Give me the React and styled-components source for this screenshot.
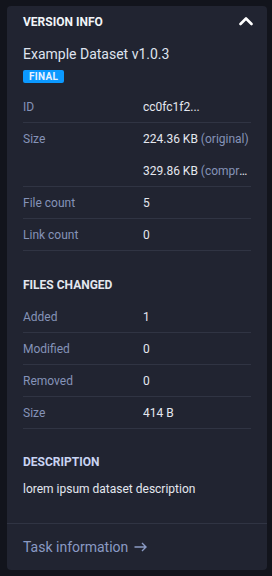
import React from "react";
import styled, { createGlobalStyle } from "styled-components";

const Global = createGlobalStyle`
  html, body { margin: 0; padding: 0; background: #12141c; }
  body { font-family: Roboto, "Liberation Sans", sans-serif; -webkit-font-smoothing: antialiased; }
  * { box-sizing: border-box; }
`;

const Page = styled.div`
  padding: 6px 5px 6px 7px;
  width: 272px;
  height: 576px;
`;

const Card = styled.section`
  width: 260px;
  height: 564px;
  background: #212431;
  border-radius: 4px;
  display: flex;
  flex-direction: column;
`;

const Body = styled.div`
  flex: 1;
  padding: 8px 16px 0 16px;
  display: flex;
  flex-direction: column;
`;

const Header = styled.div`
  display: flex;
  align-items: center;
  justify-content: space-between;
  height: 16px;
`;

const HeaderTitle = styled.h2`
  margin: 0;
  font-size: 12px;
  font-weight: 700;
  line-height: 16px;
  color: #f2f4f8;
`;

const Toggle = styled.button`
  border: 0;
  background: none;
  padding: 0;
  margin-right: -2px;
  margin-top: -3px;
  display: flex;
  align-items: center;
  cursor: pointer;
`;

const Title = styled.div`
  margin-top: 14px;
  font-size: 14px;
  line-height: 20px;
  color: #dfe3ee;
`;

const Badge = styled.span`
  align-self: flex-start;
  margin-top: 6px;
  height: 13px;
  padding: 0 6px;
  background: #0b99ff;
  border-radius: 2px;
  font-size: 10px;
  font-weight: 700;
  line-height: 13px;
  letter-spacing: 0.3px;
  color: #e8f2ff;
`;

const Table = styled.div`
  margin-top: ${(p) => p.$mt}px;
  display: flex;
  flex-direction: column;
`;

const Row = styled.div`
  display: grid;
  grid-template-columns: 120px 108px;
  box-shadow: inset 0 -1px 0 #303443;
`;

const Label = styled.div`
  font-size: 12px;
  line-height: 32px;
  color: #8593b8;
`;

const Values = styled.div`
  display: flex;
  flex-direction: column;
  min-width: 0;
`;

const Value = styled.div`
  font-size: 12px;
  line-height: 32px;
  color: #e4e7ef;
  white-space: nowrap;
  overflow: hidden;
  text-overflow: ellipsis;
`;

const Muted = styled.span`
  color: #8593b8;
`;

const SectionTitle = styled.h3`
  margin: ${(p) => p.$mt}px 0 0 0;
  font-size: 12px;
  font-weight: 700;
  line-height: 16px;
  color: ${(p) => p.$color || "#e4e7ef"};
`;

const Desc = styled.p`
  margin: 9px 0 0 0;
  font-size: 12px;
  line-height: 20px;
  color: #e4e7ef;
`;

const Footer = styled.a`
  display: flex;
  align-items: center;
  gap: 6px;
  border-top: 1px solid #303443;
  padding: 13px 16px 13px;
  font-size: 14px;
  line-height: 20px;
  color: #8a9ac4;
  text-decoration: none;
`;

const Chevron = () => (
  <svg width="14" height="10" viewBox="0 0 14 10" fill="none">
    <path d="M1.5 8L7 2.5L12.5 8" stroke="#ffffff" strokeWidth="2.6" strokeLinecap="round" strokeLinejoin="round" />
  </svg>
);

const Arrow = () => (
  <svg width="13" height="10" viewBox="0 0 13 10" fill="none">
    <path d="M0.5 5H12M8 1L12 5L8 9" stroke="#8a9ac4" strokeWidth="1.4" />
  </svg>
);

const versionRows = [
  { label: "ID", values: [["cc0fc1f2...", null]] },
  { label: "Size", values: [["224.36 KB", "(original)"], ["329.86 KB", "(compressed)"]] },
  { label: "File count", values: [["5", null]] },
  { label: "Link count", values: [["0", null]] },
];

const changedRows = [
  { label: "Added", values: [["1", null]] },
  { label: "Modified", values: [["0", null]] },
  { label: "Removed", values: [["0", null]] },
  { label: "Size", values: [["414 B", null]] },
];

const InfoTable = ({ rows, mt }) => (
  <Table $mt={mt}>
    {rows.map((r, i) => (
      <Row key={i}>
        <Label>{r.label}</Label>
        <Values>
          {r.values.map(([v, m], j) => (
            <Value key={j}>
              {v}
              {m && <Muted> {m}</Muted>}
            </Value>
          ))}
        </Values>
      </Row>
    ))}
  </Table>
);

export default function App() {
  return (
    <>
      <Global />
      <Page>
        <Card>
          <Body>
            <Header>
              <HeaderTitle>VERSION INFO</HeaderTitle>
              <Toggle aria-label="collapse"><Chevron /></Toggle>
            </Header>
            <Title>Example Dataset v1.0.3</Title>
            <Badge>FINAL</Badge>
            <InfoTable rows={versionRows} mt={8} />
            <SectionTitle $mt={26}>FILES CHANGED</SectionTitle>
            <InfoTable rows={changedRows} mt={8} />
            <SectionTitle $mt={25} $color="#c9d4f2">DESCRIPTION</SectionTitle>
            <Desc>lorem ipsum dataset description</Desc>
          </Body>
          <Footer href="#">Task information<Arrow /></Footer>
        </Card>
      </Page>
    </>
  );
}
